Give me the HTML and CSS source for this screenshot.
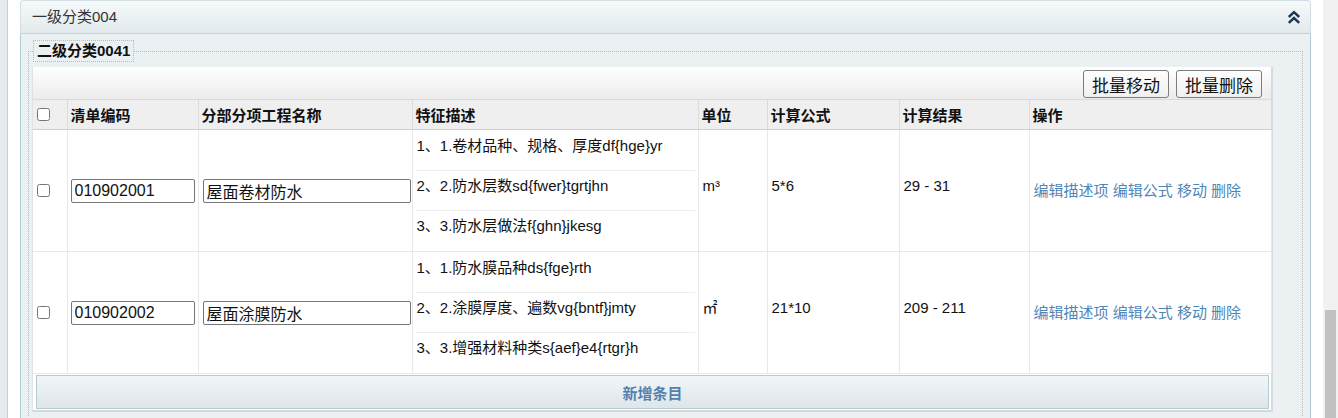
FILE: index.html
```html
<!DOCTYPE html>
<html lang="zh">
<head>
<meta charset="utf-8">
<title>分类</title>
<link rel="stylesheet" href="styles.css">
</head>
<body>
<div class="page">
  <div class="side-strip"></div>
  <div class="main">
    <div class="panel">
      <div class="panel-head">
        <span class="panel-title">一级分类004</span>
        <svg class="collapse-icon" width="14" height="14" viewBox="0 0 14 14"><polyline points="1.8,7 7,2.2 12.2,7" /><polyline points="1.8,12.8 7,8 12.2,12.8" /></svg>
      </div>
      <div class="panel-body">
        <fieldset class="group">
          <legend class="group-title">二级分类0041</legend>
          <div class="grid">
            <div class="toolbar">
              <button class="btn">批量移动</button>
              <button class="btn">批量删除</button>
            </div>
            <table class="items">
              <colgroup>
                <col class="c-check"><col class="c-code"><col class="c-name"><col class="c-feat"><col class="c-unit"><col class="c-formula"><col class="c-result"><col class="c-op">
              </colgroup>
              <thead>
                <tr>
                  <th><input type="checkbox" class="chk"></th>
                  <th>清单编码</th>
                  <th>分部分项工程名称</th>
                  <th>特征描述</th>
                  <th>单位</th>
                  <th>计算公式</th>
                  <th>计算结果</th>
                  <th>操作</th>
                </tr>
              </thead>
              <tbody>
                <tr>
                  <td><input type="checkbox" class="chk"></td>
                  <td><input type="text" class="inp inp-code" value="010902001"></td>
                  <td><input type="text" class="inp inp-name" value="屋面卷材防水"></td>
                  <td class="feat">
                    <div class="feat-item">1、1.卷材品种、规格、厚度df{hge}yr</div>
                    <div class="feat-item">2、2.防水层数sd{fwer}tgrtjhn</div>
                    <div class="feat-item">3、3.防水层做法f{ghn}jkesg</div>
                  </td>
                  <td class="data">m³</td>
                  <td class="data">5*6</td>
                  <td class="data">29 - 31</td>
                  <td class="ops"><a>编辑描述项</a> <a>编辑公式</a> <a>移动</a> <a>删除</a></td>
                </tr>
                <tr>
                  <td><input type="checkbox" class="chk"></td>
                  <td><input type="text" class="inp inp-code" value="010902002"></td>
                  <td><input type="text" class="inp inp-name" value="屋面涂膜防水"></td>
                  <td class="feat">
                    <div class="feat-item">1、1.防水膜品种ds{fge}rth</div>
                    <div class="feat-item">2、2.涂膜厚度、遍数vg{bntf}jmty</div>
                    <div class="feat-item">3、3.增强材料种类s{aef}e4{rtgr}h</div>
                  </td>
                  <td class="data">㎡</td>
                  <td class="data">21*10</td>
                  <td class="data">209 - 211</td>
                  <td class="ops"><a>编辑描述项</a> <a>编辑公式</a> <a>移动</a> <a>删除</a></td>
                </tr>
              </tbody>
            </table>
            <div class="add-row">新增条目</div>
          </div>
        </fieldset>
      </div>
    </div>
  </div>
  <div class="scrollbar"><div class="thumb"></div></div>
</div>
</body>
</html>
```

FILE: styles.css
```css
html, body {
  margin: 0;
  padding: 0;
  background: #ffffff;
}
body {
  font-family: "Liberation Sans", "Noto Sans CJK SC", sans-serif;
  font-size: 15px;
  color: #111;
}
.page {
  display: flex;
  height: 418px;
  overflow: hidden;
}
.side-strip {
  width: 7px;
  flex: none;
  background: #e4ecef;
  border-right: 1px solid #bfd2d9;
}
.main {
  flex: 1;
  padding: 0 12px 0 12px;
  min-width: 0;
}
.scrollbar {
  width: 15px;
  flex: none;
  background: #f1f1f1;
  display: flex;
  flex-direction: column;
  align-items: center;
}
.thumb {
  margin-top: 310px;
  width: 11px;
  flex: 1;
  background: #c1c1c1;
}
.panel {
  height: 100%;
  display: flex;
  flex-direction: column;
}
.panel-head {
  height: 32px;
  display: flex;
  align-items: center;
  justify-content: space-between;
  padding: 0 9px 0 11px;
  border: 1px solid #d2dee3;
  border-bottom-color: #c3d4db;
  border-radius: 4px 4px 0 0;
  background: linear-gradient(#f6f9fa, #e2eaed);
}
.panel-title {
  font-size: 15px;
  color: #333;
  line-height: 20px;
}
.collapse-icon {
  display: block;
  fill: none;
  stroke: #1d3556;
  stroke-width: 2.5;
}
.panel-body {
  flex: 1;
  background: #ebf1f3;
  border-left: 1px solid #b3ccd5;
  border-right: 1px solid #b3ccd5;
  padding: 6px 7px 0 7px;
}
.group {
  margin: 0;
  border: 1px dotted #9cc6cd;
  border-bottom: none;
  padding: 5px 28px 4px 4px;
  min-width: 0;
}
.group-title {
  border: 1px dotted #9cc6cd;
  padding: 0 3px;
  margin-left: 0;
  font-weight: bold;
  font-size: 15px;
  line-height: 20px;
  color: #111;
}
.grid {
  width: 1238px;
  background: #fff;
  border-left: 1px solid #e2e2e2;
  border-right: 2px solid #d9d9d9;
  border-bottom: 2px solid #d6d6d6;
  box-sizing: content-box;
  margin-left: -1px;
}
.toolbar {
  height: 32px;
  display: flex;
  justify-content: flex-end;
  align-items: center;
  gap: 7px;
  padding-right: 9px;
  background: linear-gradient(#ffffff, #ececec);
  box-sizing: border-box;
}
.btn {
  height: 28px;
  margin-top: 2px;
  padding: 0 8px;
  font-family: inherit;
  font-size: 17px;
  color: #111;
  background: linear-gradient(#fdfdfd, #f0f0f0);
  border: 1px solid #7c7c7c;
  border-radius: 3px;
}
.items {
  width: 1238px;
  table-layout: fixed;
  border-collapse: collapse;
}
.c-check { width: 34px; }
.c-code { width: 131px; }
.c-name { width: 214px; }
.c-feat { width: 286px; }
.c-unit { width: 69px; }
.c-formula { width: 132px; }
.c-result { width: 130px; }
.c-op { width: 242px; }
.items th {
  height: 29px;
  padding: 0 3px;
  text-align: left;
  font-weight: bold;
  font-size: 15px;
  background: #efefef;
  border-top: 1px solid #dadada;
  border-bottom: 1px solid #cfcfcf;
  border-left: 1px solid #dcdcdc;
}
.items th:first-child,
.items td:first-child {
  border-left: none;
  padding: 0;
}
.items td {
  padding: 0 3px;
  border: 1px solid #e8e8e8;
  vertical-align: middle;
  line-height: 20px;
}
.items tbody tr:first-child td { border-top: none; }
.chk {
  display: block;
  width: 13px;
  height: 13px;
  margin: 0 0 0 4px;
}
.inp {
  box-sizing: border-box;
  height: 24px;
  font-family: inherit;
  font-size: 16px;
  color: #111;
  padding: 0 3px;
  border: 1px solid #767676;
  border-radius: 2px;
  background: #fff;
}
.inp-code { width: 124px; }
.inp-name { width: 208px; margin-left: 1px; }
.items td.feat {
  padding: 1px 3px 0 3px;
}
.feat-item {
  height: 40px;
  box-sizing: border-box;
  padding: 5px 0 0 1px;
  line-height: 20px;
  border-bottom: 1px solid #ececec;
  white-space: nowrap;
}
.feat-item:last-child { border-bottom: none; }
.items td.data {
  padding: 0 4px 10px 4px;
}
.items td.ops {
  padding: 0 4px;
}
.ops a {
  color: #4f86b8;
  text-decoration: none;
  cursor: pointer;
}
.add-row {
  height: 32px;
  margin: 1px 2px 1px 3px;
  border: 1px solid #b4cbd4;
  background: linear-gradient(#f2f5f7, #dde6ea);
  display: flex;
  align-items: center;
  justify-content: center;
  font-weight: bold;
  font-size: 15px;
  color: #5282ad;
}
```
